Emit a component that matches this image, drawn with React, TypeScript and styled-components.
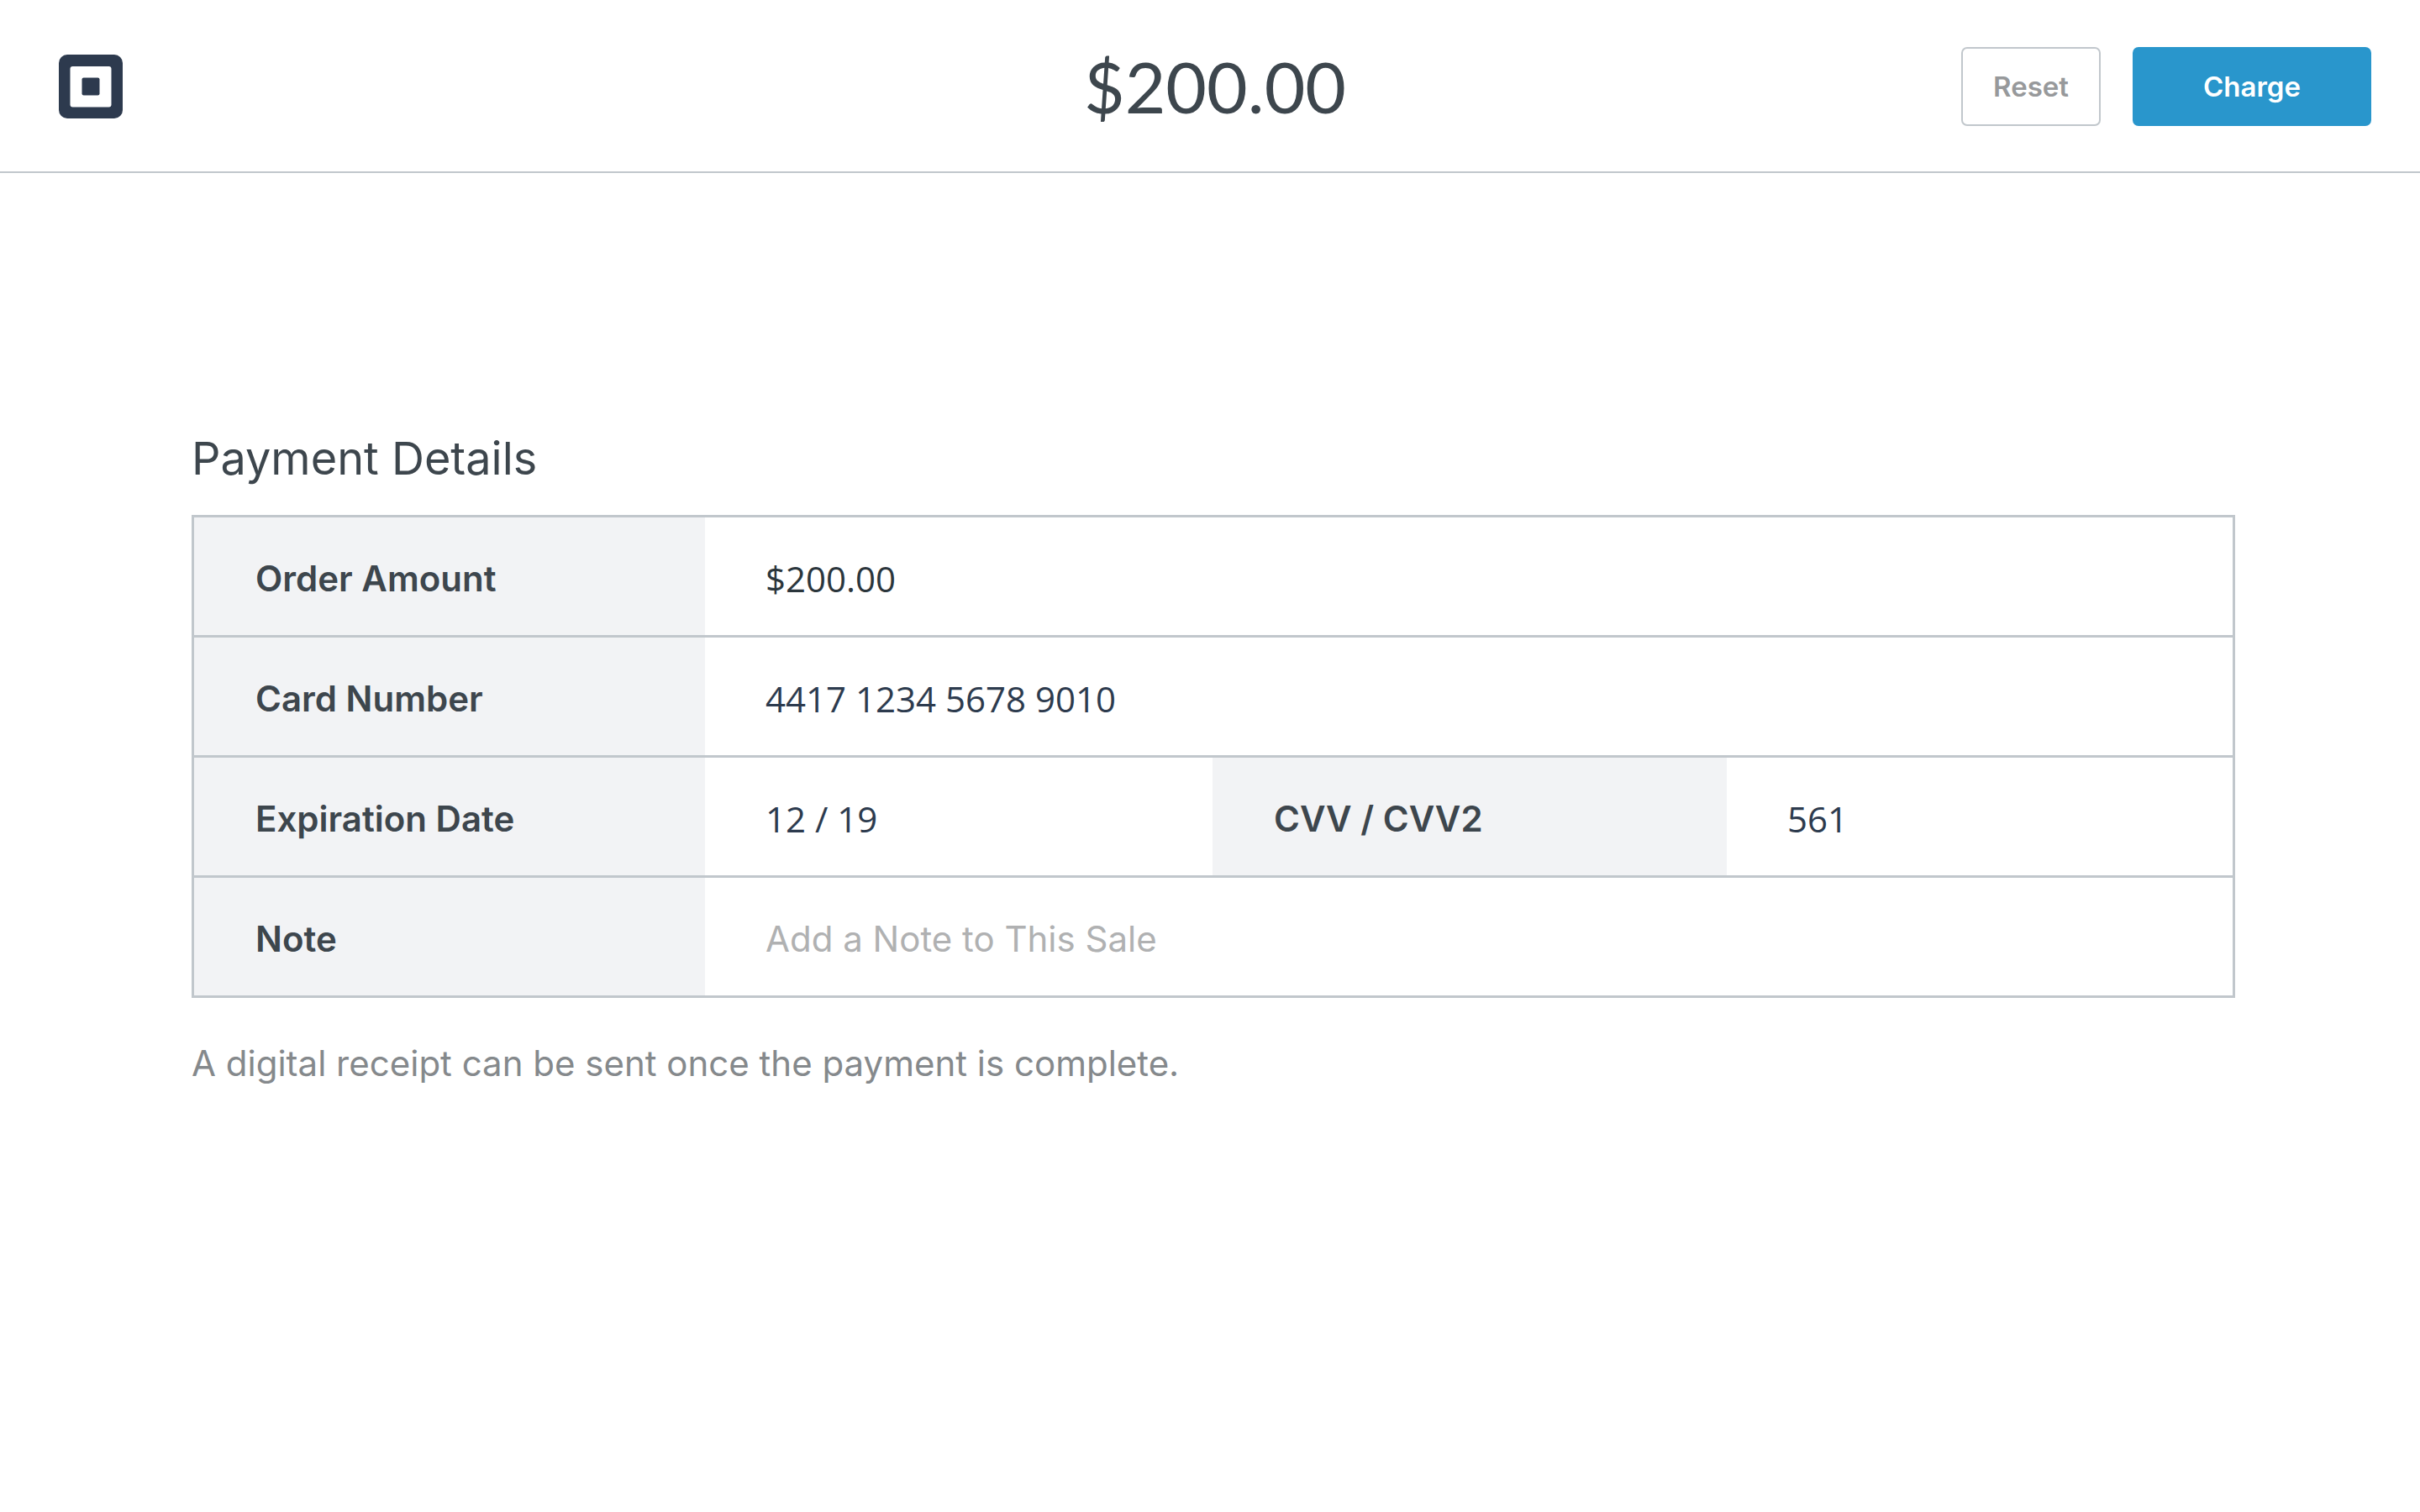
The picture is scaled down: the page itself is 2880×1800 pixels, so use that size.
import React from "react";
import styled, { createGlobalStyle } from "styled-components";

const color = {
  ink: "#3d464d",
  value: "#2d3b4e",
  amount: "#2b363c",
  muted: "#85898c",
  placeholder: "#b0b1b2",
  reset: "#97999b",
  line: "#c1c7cc",
  fill: "#f2f3f5",
  primary: "#2996cc",
  brand: "#2d3a4e",
};

const textFont = `Inter, "Liberation Sans", sans-serif`;
const numberFont = `"Open Sans", "Noto Sans", sans-serif`;

const GlobalStyle = createGlobalStyle`
  *, *::before, *::after { box-sizing: border-box; }
  body {
    margin: 0;
    background: #fff;
    color: ${color.ink};
    font-family: ${textFont};
  }
`;

const Header = styled.header`
  display: grid;
  grid-template-columns: 1fr auto 1fr;
  align-items: center;
  min-height: 206px;
  padding: 2px 58px 0 70px;
  border-bottom: 2px solid ${color.line};
`;

const Logo = styled.svg`
  display: block;
  width: 76px;
  height: 76px;
`;

const Total = styled.h1`
  margin: 0;
  font-family: Lato, sans-serif;
  font-size: 84px;
  font-weight: 400;
  line-height: 100px;
`;

const Actions = styled.div`
  display: flex;
  justify-content: flex-end;
  gap: 38px;
`;

const Button = styled.button<{ $primary?: boolean }>`
  height: 94px;
  min-width: ${(p) => (p.$primary ? "284px" : "166px")};
  padding: 0 36px;
  border: 2px solid ${(p) => (p.$primary ? color.primary : color.line)};
  border-radius: 7px;
  background: ${(p) => (p.$primary ? color.primary : "#fff")};
  color: ${(p) => (p.$primary ? "#fff" : color.reset)};
  font-family: ${textFont};
  font-size: 33px;
  font-weight: 600;
  line-height: 40px;
  cursor: pointer;
`;

const Main = styled.main`
  padding: 308px 220px 60px 228px;
`;

const Heading = styled.h2`
  margin: 0 0 35px;
  font-size: 54px;
  font-weight: 400;
  line-height: 64px;
`;

const Fields = styled.div`
  border: 3px solid ${color.line};
`;

const Row = styled.div`
  display: grid;
  grid-template-columns: 608fr 604fr 612fr 602fr;

  & + & {
    border-top: 3px solid ${color.line};
  }
`;

const Label = styled.label`
  display: flex;
  align-items: center;
  height: 140px;
  padding: 6px 24px 0 73px;
  background: ${color.fill};
  font-size: 42px;
  font-weight: 600;
  line-height: 56px;
`;

const Input = styled.input<{ $wide?: boolean; $dark?: boolean; $text?: boolean }>`
  grid-column: span ${(p) => (p.$wide ? 3 : 1)};
  width: 100%;
  min-width: 0;
  height: 140px;
  padding: 4px 24px 0 72px;
  border: 0;
  outline: 0;
  background: transparent;
  color: ${(p) => (p.$dark ? color.amount : color.value)};
  font-family: ${(p) => (p.$text ? textFont : numberFont)};
  font-size: 42px;
  line-height: 56px;

  &::placeholder {
    color: ${color.placeholder};
    opacity: 1;
  }
`;

const Hint = styled.p`
  margin: 50px 0 0;
  color: ${color.muted};
  font-size: 42px;
  line-height: 56px;
`;

type Field = {
  id: string;
  label: string;
  value?: string;
  placeholder?: string;
  dark?: boolean;
};

const rows: Field[][] = [
  [{ id: "amount", label: "Order Amount", value: "$200.00", dark: true }],
  [{ id: "card", label: "Card Number", value: "4417 1234 5678 9010" }],
  [
    { id: "expiration", label: "Expiration Date", value: "12 / 19" },
    { id: "cvv", label: "CVV / CVV2", value: "561" },
  ],
  [{ id: "note", label: "Note", placeholder: "Add a Note to This Sale" }],
];

export default function App() {
  return (
    <form onSubmit={(e) => e.preventDefault()}>
      <GlobalStyle />
      <Header>
        <Logo viewBox="0 0 76 76" role="img" aria-label="Square">
          <rect width="76" height="76" rx="10" fill={color.brand} />
          <rect x="13.5" y="14" width="49" height="48.5" rx="3" fill="#fff" />
          <rect x="27.5" y="27.5" width="21" height="21" rx="2" fill={color.brand} />
        </Logo>
        <Total>$200.00</Total>
        <Actions>
          <Button type="reset">Reset</Button>
          <Button type="submit" $primary>
            Charge
          </Button>
        </Actions>
      </Header>
      <Main>
        <Heading>Payment Details</Heading>
        <Fields>
          {rows.map((fields) => (
            <Row key={fields[0].id}>
              {fields.map((f) => (
                <React.Fragment key={f.id}>
                  <Label htmlFor={f.id}>{f.label}</Label>
                  <Input
                    id={f.id}
                    type="text"
                    defaultValue={f.value}
                    placeholder={f.placeholder}
                    $wide={fields.length === 1}
                    $dark={f.dark}
                    $text={!f.value}
                  />
                </React.Fragment>
              ))}
            </Row>
          ))}
        </Fields>
        <Hint>A digital receipt can be sent once the payment is complete.</Hint>
      </Main>
    </form>
  );
}
